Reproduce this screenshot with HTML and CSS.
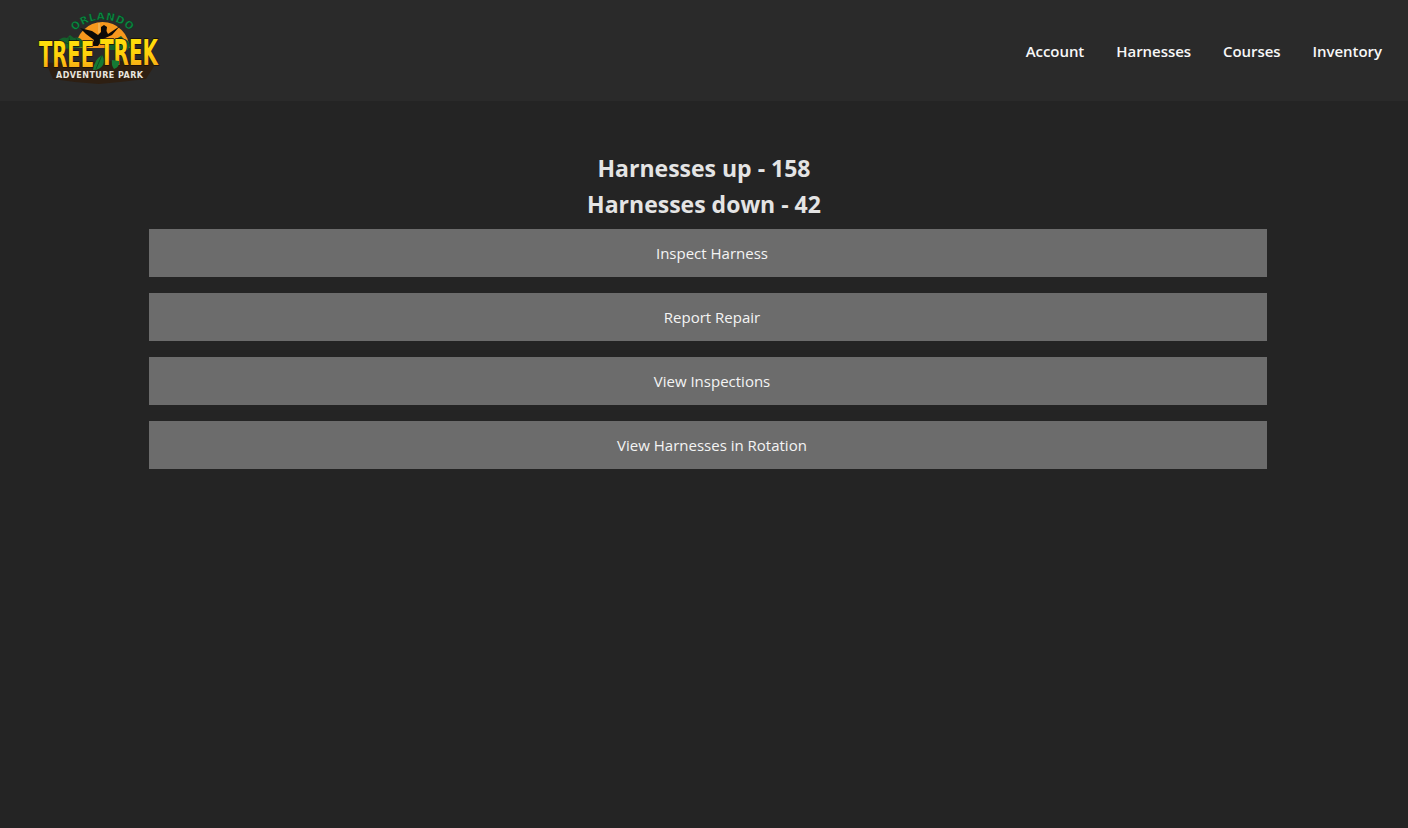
FILE: index.html
```html
<!DOCTYPE html>
<html lang="en">
<head>
<meta charset="utf-8">
<title>Harnesses</title>
<link rel="stylesheet" href="styles.css">
</head>
<body>
<header class="topbar">
  <svg class="logo" viewBox="0 0 160 90" width="160" height="90" role="img" aria-label="Orlando Tree Trek Adventure Park">
    <defs>
      <linearGradient id="yel" x1="0" y1="0" x2="0" y2="1">
        <stop offset="0" stop-color="#ffe60a"/>
        <stop offset=".55" stop-color="#ffd00c"/>
        <stop offset="1" stop-color="#f5991a"/>
      </linearGradient>
      <path id="arc" d="M52 29 A40 40 0 0 1 113 29"/>
      <clipPath id="sunclip"><rect x="40" y="0" width="85" height="43"/></clipPath>
    </defs>
    <circle cx="82.500" cy="44" r="27" fill="#f7981d" clip-path="url(#sunclip)"/>
    <text class="orlando"><textPath href="#arc" startOffset="50%" text-anchor="middle">ORLANDO</textPath></text>
    <line x1="79" y1="18" x2="79" y2="28" stroke="#e8d9b0" stroke-width=".7"/>
    <path d="M36 38 Q42 31 47 33 L50 30 L54 33 Q60 31 64 38 L70 42 L42 44 Z" fill="#14622c"/>
    <path d="M86 40 Q90 33 96 34 L101 31 L104 34 Q108 34 110 40 L108 45 L88 45 Z" fill="#14622c"/>
    <path d="M40 36 L52 40 M49 32 L50 40 M56 33 L58 40 M90 37 L106 40 M98 33 L97 42" stroke="#0b3c1c" stroke-width=".7"/>
    <path d="M60 23 L72 26 L78 30 L81 27 L81 22 L84 20 L87 22 L86.500 26 L88 29 L100 21 L92 30 L83 34 L78 41 L71 41 L74 35 L66 29 Z" fill="#0c0a08"/>
    <path d="M26 58 L138 55 L126 74 L100 77 L79 79 L55 77 L33 74 Z" fill="#2e1f12"/>
    <text class="tree" x="19" y="61.500" textLength="55" lengthAdjust="spacingAndGlyphs">TREE</text>
    <text class="tree" x="80" y="59.500" textLength="58" lengthAdjust="spacingAndGlyphs">TREK</text>
    <path d="M82 50 Q74 55 73 65 Q80 65 83 60 Q85 55 82 50 Z" fill="#157a34"/>
    <path d="M82 50 L76 64" stroke="#0b3c1c" stroke-width=".7"/>
    <path d="M92 55 Q91 60 94 64 Q100 62 99 56 Z" fill="#157a34"/>
    <text class="park" x="36" y="72.700" textLength="87" lengthAdjust="spacing">ADVENTURE PARK</text>
  </svg>
  <nav class="menu">
    <a href="#">Account</a>
    <a href="#">Harnesses</a>
    <a href="#">Courses</a>
    <a href="#">Inventory</a>
  </nav>
</header>
<main class="content">
  <h2 class="stat">Harnesses up - 158</h2>
  <h2 class="stat">Harnesses down - 42</h2>
  <ul class="actions">
    <li><button class="action" type="button">Inspect Harness</button></li>
    <li><button class="action" type="button">Report Repair</button></li>
    <li><button class="action" type="button">View Inspections</button></li>
    <li><button class="action" type="button">View Harnesses in Rotation</button></li>
  </ul>
</main>
</body>
</html>
```
FILE: styles.css
```css
* { box-sizing: border-box; }
html, body { height: 100%; }
body {
  margin: 0;
  background: #242424;
  color: #fff;
  font-family: "Open Sans", "Noto Sans", "Liberation Sans", sans-serif;
}
.topbar {
  height: 101px;
  background: #2a2a2a;
  display: flex;
  align-items: flex-start;
  justify-content: space-between;
  padding: 5px 26px 0 20px;
}
.logo { display: block; flex: none; }
.menu {
  display: flex;
  gap: 32px;
  padding-top: 34px;
}
.menu a {
  color: #f7f7f7;
  font-size: 15px;
  font-weight: 600;
  letter-spacing: -.05px;
  line-height: 24px;
  text-decoration: none;
}
.content { padding-top: 49px; }
.stat {
  margin: 0;
  font-size: 23px;
  font-weight: 700;
  line-height: 36px;
  text-align: center;
  color: #e4e4e4;
}
.actions {
  list-style: none;
  margin: 7px 141px 0 149px;
  padding: 0;
  display: flex;
  flex-direction: column;
  gap: 16px;
}
.action {
  display: block;
  width: 100%;
  height: 48px;
  border: 0;
  padding: 0 0 0 8px;
  background: #6c6c6c;
  color: #f4f4f4;
  font-family: inherit;
  font-size: 15px;
  text-align: center;
}
.orlando {
  font-family: "DejaVu Sans", sans-serif;
  font-size: 10.500px;
  font-weight: 700;
  letter-spacing: .5px;
  fill: #0c8a42;
  stroke: #07331a;
  stroke-width: .4px;
}
.tree {
  font-family: "DejaVu Sans", sans-serif;
  font-size: 36px;
  font-weight: 700;
  fill: url(#yel);
  stroke: #1a0f06;
  stroke-width: 1.500px;
  paint-order: stroke;
}
.park {
  font-family: "DejaVu Sans", sans-serif;
  font-size: 8px;
  font-weight: 700;
  fill: #e8e4de;
}
```
